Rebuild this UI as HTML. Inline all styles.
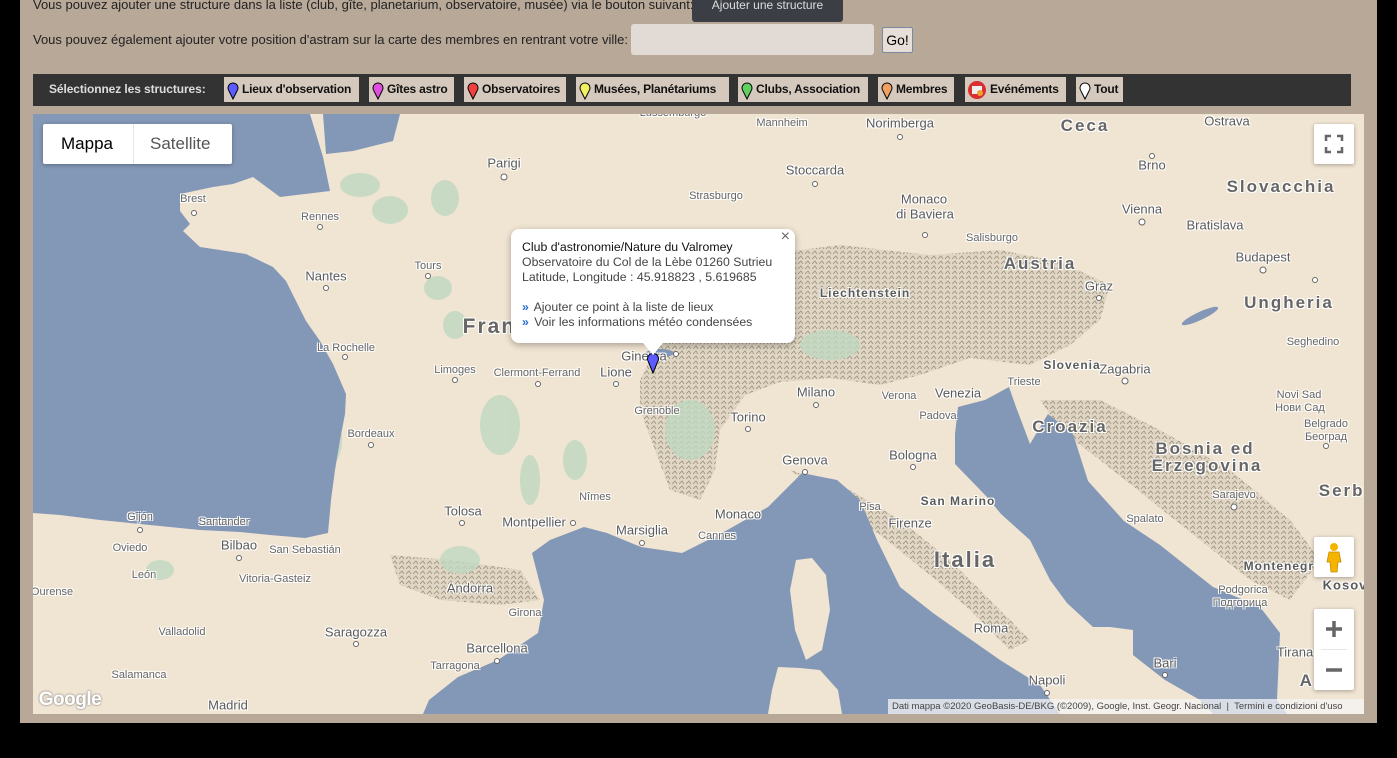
<!DOCTYPE html>
<html><head><meta charset="utf-8"><style>
*{margin:0;padding:0;box-sizing:border-box}
body{width:1397px;height:758px;background:#000;position:relative;overflow:hidden;font-family:"Liberation Sans",sans-serif}
#panel{position:absolute;left:20px;top:0;width:1357px;height:723px;background:#b8a898}
.t{position:absolute;font-size:13px;color:#222;white-space:nowrap}
#addbtn{position:absolute;left:692px;top:-8px;width:151px;height:30px;background:#3b3e44;border-radius:3px;color:#ddd;font-size:12px;text-align:center;line-height:26px;padding-top:0}
#inp{position:absolute;left:631px;top:24px;width:243px;height:31px;background:#e2dbd5;border-radius:3px}
#go{position:absolute;left:882px;top:27px;width:31px;height:26px;background:#e6ded7;border:1px solid #7a8aa0;border-radius:2px;font-size:14px;line-height:24px;text-align:center}
#bar{position:absolute;left:33px;top:74px;width:1318px;height:32px;background:#333}
.b{position:absolute;top:3px;height:25px;background:#d5c9bd;font-size:12px;font-weight:bold;color:#111;line-height:25px;padding-left:18px;white-space:nowrap;letter-spacing:-0.2px}
.b svg{position:absolute;left:3px;top:5px}
#map{position:absolute;left:33px;top:114px;width:1331px;height:600px;overflow:hidden;background:#f0e4d2}
.l{position:absolute;white-space:nowrap;color:#5a5a5a;transform:translate(-50%,-50%);text-shadow:-1px -1px 0 #fff,1px -1px 0 #fff,-1px 1px 0 #fff,1px 1px 0 #fff;font-size:13px}
.s{font-size:11px;color:#666}
.c{font-weight:bold;letter-spacing:2px;font-size:17px;color:#666}
.ctl{position:absolute;background:#fff;border-radius:2px;box-shadow:0 1px 4px rgba(0,0,0,.3)}
</style></head><body>
<div id="panel"></div>
<div class="t" style="left:33px;top:-3px">Vous pouvez ajouter une structure dans la liste (club, gîte, planetarium, observatoire, musée) via le bouton suivant:</div>
<div id="addbtn">Ajouter une structure</div>
<div class="t" style="left:33px;top:32px">Vous pouvez également ajouter votre position d'astram sur la carte des membres en rentrant votre ville:</div>
<div id="inp"></div>
<div id="go">Go!</div>
<div id="bar">
<div style="position:absolute;left:16px;top:0;line-height:30px;color:#ddd;font-size:12px;font-weight:bold;letter-spacing:-0.1px">Sélectionnez les structures:</div>
<div class="b" style="left:191px;width:135px"><svg width="12" height="18" viewBox="0 0 12 18"><path d="M6 17 L2 9 A5 5 0 1 1 10 9 Z" fill="#5b5bff" stroke="#000"/></svg>Lieux d'observation</div>
<div class="b" style="left:336px;width:85px"><svg width="12" height="18" viewBox="0 0 12 18"><path d="M6 17 L2 9 A5 5 0 1 1 10 9 Z" fill="#e04ee0" stroke="#000"/></svg>Gîtes astro</div>
<div class="b" style="left:431px;width:102px"><svg width="12" height="18" viewBox="0 0 12 18"><path d="M6 17 L2 9 A5 5 0 1 1 10 9 Z" fill="#f04040" stroke="#000"/></svg>Observatoires</div>
<div class="b" style="left:543px;width:153px"><svg width="12" height="18" viewBox="0 0 12 18"><path d="M6 17 L2 9 A5 5 0 1 1 10 9 Z" fill="#f0f060" stroke="#000"/></svg>Musées, Planétariums</div>
<div class="b" style="left:705px;width:130px"><svg width="12" height="18" viewBox="0 0 12 18"><path d="M6 17 L2 9 A5 5 0 1 1 10 9 Z" fill="#60d060" stroke="#000"/></svg>Clubs, Association</div>
<div class="b" style="left:845px;width:76px"><svg width="12" height="18" viewBox="0 0 12 18"><path d="M6 17 L2 9 A5 5 0 1 1 10 9 Z" fill="#f0a060" stroke="#000"/></svg>Membres</div>
<div class="b" style="left:932px;width:101px;padding-left:25px"><svg width="20" height="20" viewBox="0 0 20 20" style="top:3px;left:2px"><circle cx="10" cy="10" r="9" fill="#d83030"/><rect x="5" y="6" width="10" height="8" fill="#eee"/><circle cx="13" cy="13" r="3" fill="#f0a030"/></svg>Evénéments</div>
<div class="b" style="left:1043px;width:47px"><svg width="12" height="18" viewBox="0 0 12 18"><path d="M6 17 L2 9 A5 5 0 1 1 10 9 Z" fill="#fff" stroke="#000"/></svg>Tout</div>
</div>
<div id="map">
<svg width="1331" height="600" viewBox="33 114 1331 600" style="position:absolute;left:0;top:0">
<defs>
<pattern id="mt" width="7" height="5" patternUnits="userSpaceOnUse"><rect width="7" height="5" fill="#ddd3c0"/><path d="M0 4L3 1L5 4" fill="none" stroke="#8a8270" stroke-width=".8"/></pattern>
</defs>
<g fill="url(#mt)" opacity=".85">
<path d="M690 250 L760 255 L840 245 L930 255 L1000 250 L1060 262 L1110 285 L1100 320 L1070 345 L1030 365 L970 358 L920 375 L880 385 L830 378 L780 382 L745 395 L720 430 L715 470 L700 500 L670 490 L655 450 L640 410 L640 380 L660 340 L680 300 Z"/>
<path d="M390 555 L450 560 L520 570 L540 600 L500 605 L440 600 L400 585 Z"/>
<path d="M790 470 L850 490 L900 520 L950 560 L1000 610 L1030 640 L1010 650 L970 610 L930 575 L880 535 L830 500 Z"/>
<path d="M1040 400 L1100 400 L1160 430 L1230 470 L1290 520 L1320 560 L1290 600 L1250 580 L1200 540 L1150 500 L1100 460 L1060 430 Z"/>
</g>
<g fill="#bfd8c0" opacity=".8">
<ellipse cx="360" cy="185" rx="20" ry="12"/><ellipse cx="390" cy="210" rx="18" ry="14"/><ellipse cx="445" cy="198" rx="14" ry="18"/>
<ellipse cx="438" cy="288" rx="14" ry="12"/><ellipse cx="455" cy="325" rx="12" ry="14"/><ellipse cx="500" cy="425" rx="20" ry="30"/>
<ellipse cx="575" cy="460" rx="12" ry="20"/><ellipse cx="530" cy="480" rx="10" ry="25"/><ellipse cx="330" cy="440" rx="12" ry="25"/>
<ellipse cx="160" cy="570" rx="14" ry="10"/><ellipse cx="460" cy="560" rx="20" ry="14"/>
<ellipse cx="690" cy="430" rx="25" ry="30"/><ellipse cx="830" cy="345" rx="30" ry="15"/>
</g>
<path fill="#8397b7" d="M33 114 L310 114 L323 157 L330 191 L280 197 L253 177 L233 184 L213 187 L180 194 L180 211 L190 224 L183 231 L200 247 L246 254 L273 267 L286 281 L296 301 L306 321 L320 341 L333 364 L346 394 L345 414 L340 440 L335 470 L331 500 L328 533 L305 538 L270 535 L240 532 L200 530 L140 524 L100 520 L60 515 L33 513 Z"/>
<path fill="#8397b7" d="M323 114 L400 114 L393 141 L353 151 L326 154 Z"/>
<path fill="#8397b7" d="M423 714 L429 700 L458 677 L498 660 L538 633 L544 600 L532 553 L550 540 L584 527 L607 533 L641 547 L682 553 L722 533 L768 507 L802 473 L837 480 L860 500 L877 540 L900 587 L933 613 L960 632 L1000 660 L1040 685 L1060 714 Z"/>
<path fill="#8397b7" d="M958 407 L985 400 L1009 387 L1016 407 L1030 444 L1048 414 L1073 434 L1088 481 L1124 521 L1160 545 L1213 587 L1260 607 L1280 633 L1277 700 L1287 714 L1213 714 L1200 700 L1165 680 L1133 655 L1133 630 L1110 627 L1093 627 L1067 603 L1050 580 L1030 540 L1001 514 L987 497 L955 464 L955 434 Z"/>
<path fill="#f0e4d2" d="M796 560 L812 558 L826 575 L830 610 L822 650 L806 660 L795 630 L790 590 Z"/>
<path fill="#f0e4d2" d="M778 667 L800 668 L820 670 L838 690 L842 714 L768 714 L772 690 Z"/>
<ellipse cx="660" cy="353" rx="14" ry="4" fill="#8397b7"/>
<ellipse cx="1200" cy="316" rx="20" ry="4" fill="#8397b7" transform="rotate(-25 1200 316)"/>
<g fill="#fff" stroke="#666" stroke-width="1">
<circle cx="504" cy="177" r="3"/><circle cx="194" cy="213" r="2.5"/><circle cx="320" cy="227" r="2.5"/><circle cx="428" cy="276" r="2.5"/><circle cx="326" cy="288" r="2.5"/><circle cx="345" cy="357" r="2.5"/><circle cx="455" cy="380" r="2.5"/><circle cx="538" cy="384" r="2.5"/><circle cx="616" cy="384" r="2.5"/><circle cx="676" cy="354" r="2.5"/><circle cx="816" cy="405" r="2.5"/><circle cx="748" cy="429" r="2.5"/><circle cx="371" cy="445" r="2.5"/><circle cx="462" cy="523" r="2.5"/><circle cx="573" cy="523" r="2.5"/><circle cx="642" cy="543" r="2.5"/><circle cx="805" cy="472" r="2.5"/><circle cx="913" cy="467" r="2.5"/><circle cx="991" cy="628" r="3"/><circle cx="1047" cy="693" r="2.5"/><circle cx="1165" cy="675" r="2.5"/><circle cx="1142" cy="222" r="3"/><circle cx="1263" cy="270" r="3"/><circle cx="1125" cy="381" r="3"/><circle cx="1234" cy="507" r="3"/><circle cx="1099" cy="298" r="2.5"/><circle cx="925" cy="235" r="2.5"/><circle cx="815" cy="184" r="2.5"/><circle cx="900" cy="137" r="2.5"/><circle cx="1152" cy="156" r="2.5"/><circle cx="1315" cy="280" r="2.5"/><circle cx="1326" cy="446" r="2.5"/><circle cx="356" cy="644" r="2.5"/><circle cx="497" cy="661" r="2.5"/><circle cx="228" cy="717" r="2.5"/><circle cx="140" cy="530" r="2.5"/><circle cx="239" cy="558" r="2.5"/>
</g>
</svg>
<div style="position:absolute;left:-33px;top:-114px;width:1397px;height:758px">
<span class="l s" style="left:673px;top:113px">Lussemburgo</span>
<span class="l" style="left:115px;top:135px;font-weight:bold;font-size:12px">Guernsey</span>
<span class="l" style="left:124px;top:152px;font-weight:bold;font-size:12px">Jersey</span>
<span class="l s" style="left:782px;top:123px">Mannheim</span>
<span class="l" style="left:900px;top:123px">Norimberga</span>
<span class="l c" style="left:1085px;top:126px">Ceca</span>
<span class="l" style="left:1227px;top:121px">Ostrava</span>
<span class="l" style="left:504px;top:163px">Parigi</span>
<span class="l" style="left:815px;top:170px">Stoccarda</span>
<span class="l s" style="left:716px;top:196px">Strasburgo</span>
<span class="l" style="left:1152px;top:165px">Brno</span>
<span class="l c" style="left:1281px;top:187px">Slovacchia</span>
<span class="l s" style="left:193px;top:199px">Brest</span>
<span class="l" style="left:924px;top:199px">Monaco</span>
<span class="l" style="left:925px;top:214px">di Baviera</span>
<span class="l" style="left:1142px;top:209px">Vienna</span>
<span class="l" style="left:1215px;top:225px">Bratislava</span>
<span class="l s" style="left:320px;top:217px">Rennes</span>
<span class="l s" style="left:992px;top:238px">Salisburgo</span>
<span class="l s" style="left:428px;top:266px">Tours</span>
<span class="l c" style="left:1040px;top:264px">Austria</span>
<span class="l" style="left:1263px;top:257px">Budapest</span>
<span class="l" style="left:326px;top:276px">Nantes</span>
<span class="l" style="left:865px;top:293px;font-weight:bold;font-size:12px;letter-spacing:1px">Liechtenstein</span>
<span class="l" style="left:1099px;top:286px">Graz</span>
<span class="l c" style="left:1289px;top:303px">Ungheria</span>
<span class="l c" style="left:507px;top:327px;font-size:21px">Francia</span>
<span class="l s" style="left:346px;top:348px">La Rochelle</span>
<span class="l s" style="left:1313px;top:342px">Seghedino</span>
<span class="l" style="left:1072px;top:365px;font-weight:bold;font-size:12px;letter-spacing:1px">Slovenia</span>
<span class="l" style="left:1125px;top:369px">Zagabria</span>
<span class="l s" style="left:455px;top:370px">Limoges</span>
<span class="l s" style="left:537px;top:373px">Clermont-Ferrand</span>
<span class="l" style="left:644px;top:356px">Ginevra</span>
<span class="l" style="left:616px;top:372px">Lione</span>
<span class="l s" style="left:1024px;top:382px">Trieste</span>
<span class="l" style="left:816px;top:392px">Milano</span>
<span class="l s" style="left:899px;top:396px">Verona</span>
<span class="l" style="left:958px;top:393px">Venezia</span>
<span class="l s" style="left:1299px;top:395px">Novi Sad</span>
<span class="l s" style="left:1300px;top:408px">Нови Сад</span>
<span class="l" style="left:748px;top:417px">Torino</span>
<span class="l s" style="left:657px;top:411px">Grenoble</span>
<span class="l s" style="left:938px;top:416px">Padova</span>
<span class="l s" style="left:371px;top:434px">Bordeaux</span>
<span class="l c" style="left:1070px;top:427px">Croazia</span>
<span class="l s" style="left:1326px;top:424px">Belgrado</span>
<span class="l s" style="left:1326px;top:437px">Београд</span>
<span class="l c" style="left:1205px;top:449px">Bosnia ed</span>
<span class="l c" style="left:1207px;top:466px">Erzegovina</span>
<span class="l" style="left:913px;top:455px">Bologna</span>
<span class="l" style="left:805px;top:460px">Genova</span>
<span class="l c" style="left:1345px;top:491px">Serbi</span>
<span class="l s" style="left:595px;top:497px">Nîmes</span>
<span class="l s" style="left:1234px;top:495px">Sarajevo</span>
<span class="l" style="left:463px;top:511px">Tolosa</span>
<span class="l" style="left:958px;top:501px;font-weight:bold;font-size:12px;letter-spacing:1px">San Marino</span>
<span class="l" style="left:738px;top:514px">Monaco</span>
<span class="l" style="left:534px;top:522px">Montpellier</span>
<span class="l" style="left:642px;top:530px">Marsiglia</span>
<span class="l" style="left:910px;top:523px">Firenze</span>
<span class="l s" style="left:1145px;top:519px">Spalato</span>
<span class="l s" style="left:870px;top:507px">Pisa</span>
<span class="l s" style="left:140px;top:517px">Gijón</span>
<span class="l s" style="left:224px;top:522px">Santander</span>
<span class="l s" style="left:717px;top:536px">Cannes</span>
<span class="l" style="left:239px;top:545px">Bilbao</span>
<span class="l s" style="left:305px;top:550px">San Sebastián</span>
<span class="l s" style="left:130px;top:548px">Oviedo</span>
<span class="l c" style="left:965px;top:560px;font-size:22px">Italia</span>
<span class="l" style="left:1283px;top:566px;font-weight:bold;font-size:12px;letter-spacing:1px">Montenegro</span>
<span class="l" style="left:1345px;top:585px;font-weight:bold;letter-spacing:1px">Kosov</span>
<span class="l" style="left:470px;top:588px">Andorra</span>
<span class="l s" style="left:275px;top:579px">Vitoria-Gasteiz</span>
<span class="l s" style="left:144px;top:575px">León</span>
<span class="l s" style="left:52px;top:592px">Ourense</span>
<span class="l s" style="left:525px;top:613px">Girona</span>
<span class="l s" style="left:1243px;top:590px">Podgorica</span>
<span class="l s" style="left:1240px;top:603px">Подгорица</span>
<span class="l s" style="left:182px;top:632px">Valladolid</span>
<span class="l" style="left:356px;top:632px">Saragozza</span>
<span class="l" style="left:991px;top:628px">Roma</span>
<span class="l" style="left:1295px;top:652px">Tirana</span>
<span class="l" style="left:497px;top:648px">Barcellona</span>
<span class="l s" style="left:455px;top:666px">Tarragona</span>
<span class="l" style="left:1165px;top:663px">Bari</span>
<span class="l s" style="left:139px;top:675px">Salamanca</span>
<span class="l" style="left:1047px;top:680px">Napoli</span>
<span class="l c" style="left:1322px;top:681px">Alba</span>
<span class="l" style="left:228px;top:705px">Madrid</span>
<span class="l" style="left:70px;top:700px;font-size:19px;font-weight:bold;color:#fff;text-shadow:0 0 2px #666;letter-spacing:-0.5px">Google</span>
</div>
<svg width="14" height="22" viewBox="0 0 14 22" style="position:absolute;left:613px;top:238px"><path d="M7 21 L2.5 10 A5.5 5.5 0 1 1 11.5 10 Z" fill="#5b5bff" stroke="#000"/></svg>
<div style="position:absolute;left:478px;top:115px;width:284px;height:114px;background:#fff;border-radius:8px;box-shadow:0 2px 7px rgba(0,0,0,.3);font-size:12.3px;color:#444;padding:11px 0 0 11px;line-height:15px;white-space:nowrap">
<div style="color:#111">Club d'astronomie/Nature du Valromey</div>
<div>Observatoire du Col de la Lèbe 01260 Sutrieu</div>
<div>Latitude, Longitude : 45.918823 , 5.619685</div>
<div style="height:15px"></div>
<div><span style="color:#2a6fd6;font-weight:bold;margin-right:2px">»</span> Ajouter ce point à la liste de lieux</div>
<div><span style="color:#2a6fd6;font-weight:bold;margin-right:2px">»</span> Voir les informations météo condensées</div>
<div style="position:absolute;right:5px;top:0px;font-size:16px;color:#666">×</div>
</div>
<div style="position:absolute;left:610px;top:229px;width:0;height:0;border-left:10px solid transparent;border-right:10px solid transparent;border-top:12px solid #fff"></div>
<div class="ctl" style="left:10px;top:10px;width:189px;height:40px;font-size:17px;line-height:40px">
<span style="position:absolute;left:18px;color:#000">Mappa</span>
<span style="position:absolute;left:90px;top:0;width:1px;height:40px;background:#e6e6e6"></span>
<span style="position:absolute;left:107px;color:#555">Satellite</span>
</div>
<div class="ctl" style="left:1281px;top:10px;width:40px;height:40px">
<svg width="40" height="40" viewBox="0 0 40 40"><path d="M12 17V12H17M23 12H28V17M28 23V28H23M17 28H12V23" fill="none" stroke="#666" stroke-width="2.5"/></svg>
</div>
<div class="ctl" style="left:1281px;top:423px;width:40px;height:40px">
<svg width="40" height="40" viewBox="0 0 40 40"><circle cx="20" cy="10" r="4" fill="#f5b400"/><path d="M15 15H25L27 25H24L23 35H17L16 25H13Z" fill="#f5b400" stroke="#c88a00" stroke-width=".8"/></svg>
</div>
<div class="ctl" style="left:1281px;top:495px;width:40px;height:81px">
<svg width="40" height="81" viewBox="0 0 40 81"><path d="M12 20H28M20 12V28" stroke="#666" stroke-width="3.5"/><path d="M7 40.5H33" stroke="#e6e6e6"/><path d="M12 61H28" stroke="#666" stroke-width="3.5"/></svg>
</div>
<div style="position:absolute;left:855px;top:585px;width:476px;height:15px;background:rgba(245,245,245,.75);font-size:9.5px;color:#444;line-height:15px;white-space:nowrap;padding-left:4px">Dati mappa ©2020 GeoBasis-DE/BKG (©2009), Google, Inst. Geogr. Nacional &nbsp;|&nbsp; Termini e condizioni d'uso</div>
</div>
</body></html>
